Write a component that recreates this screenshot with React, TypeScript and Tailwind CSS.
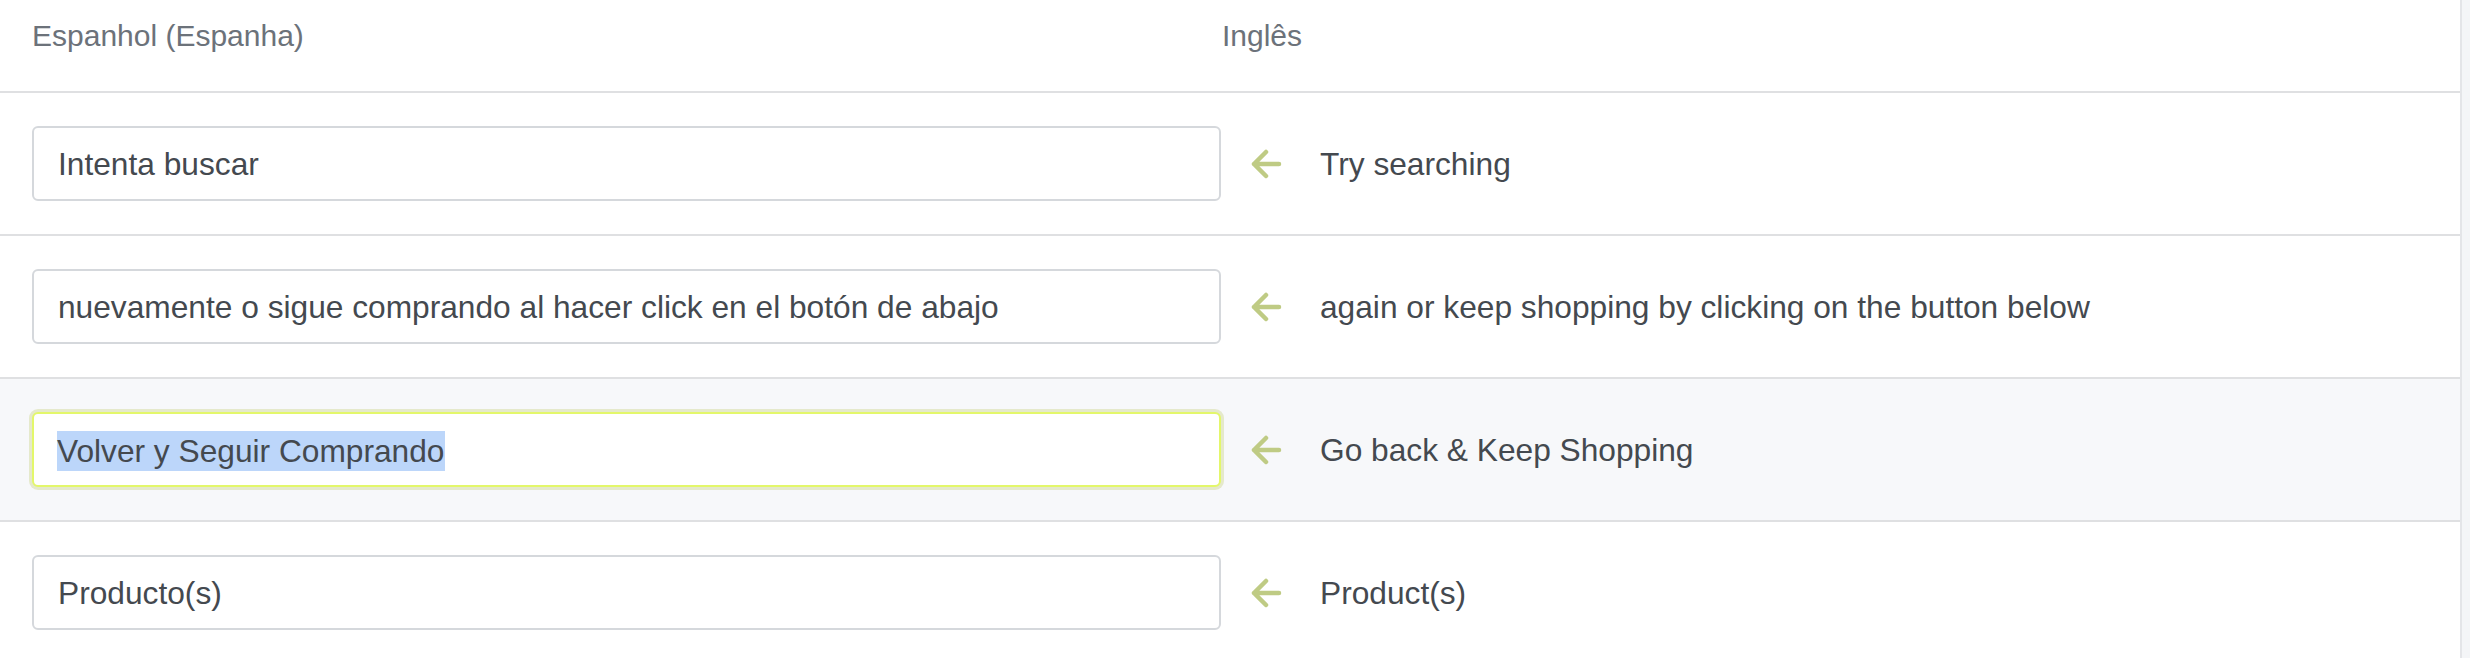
import React from "react";

type Linha = {
  origem: string;
  destino: string;
  ativa?: boolean;
};

const LINHAS: Linha[] = [
  { origem: "Intenta buscar", destino: "Try searching" },
  {
    origem: "nuevamente o sigue comprando al hacer click en el botón de abajo",
    destino: "again or keep shopping by clicking on the button below",
  },
  { origem: "Volver y Seguir Comprando", destino: "Go back & Keep Shopping", ativa: true },
  { origem: "Producto(s)", destino: "Product(s)" },
];

function SetaEsquerda() {
  return (
    <svg width="32" height="32" viewBox="0 0 32 32" fill="none" className="shrink-0">
      <path
        d="M29 16H4M16 4 4 16l12 12"
        stroke="#bfcb84"
        strokeWidth="4.5"
        strokeLinecap="round"
        strokeLinejoin="round"
      />
    </svg>
  );
}

function LinhaTraducao({ linha }: { linha: Linha }) {
  return (
    <div
      className={`flex items-center border-t-2 border-[#dfe0e2] py-[33px] pl-[32px] ${
        linha.ativa ? "bg-[#f7f8fa]" : "bg-white"
      }`}
    >
      {linha.ativa ? (
        <div className="flex h-[75px] w-[1189px] shrink-0 items-center rounded-[6px] border-2 border-[#e3f76a] bg-white pl-[23px] pt-[3px] shadow-[0_0_0_3px_#e5e9cb]">
          <span className="bg-[#bcd6fa] leading-[40px] text-[#44494f]">{linha.origem}</span>
        </div>
      ) : (
        <div className="flex h-[75px] w-[1189px] shrink-0 items-center rounded-[6px] border-2 border-[#d5d8dc] bg-white pl-[24px] pt-[3px] text-[#44494f]">
          {linha.origem}
        </div>
      )}
      <div className="ml-[29px]">
        <SetaEsquerda />
      </div>
      <div className="ml-[38px] pt-[3px] text-[#44494f]">{linha.destino}</div>
    </div>
  );
}

export default function App() {
  return (
    <div
      className="flex h-[658px] w-[2470px] overflow-hidden bg-[#f4f5f7]"
      style={{ fontFamily: '"Liberation Sans", Arial, sans-serif' }}
    >
      <div className="w-[2462px] shrink-0 border-r-2 border-[#e4e5e8] bg-white text-[31.7px]">
        <div className="flex h-[91px] pl-[32px] pt-[18px] text-[30px] leading-[36px] text-[#6c727a]">
          <div className="w-[1190px] shrink-0">Espanhol (Espanha)</div>
          <div>Inglês</div>
        </div>
        {LINHAS.map((linha) => (
          <LinhaTraducao key={linha.origem} linha={linha} />
        ))}
      </div>
    </div>
  );
}
